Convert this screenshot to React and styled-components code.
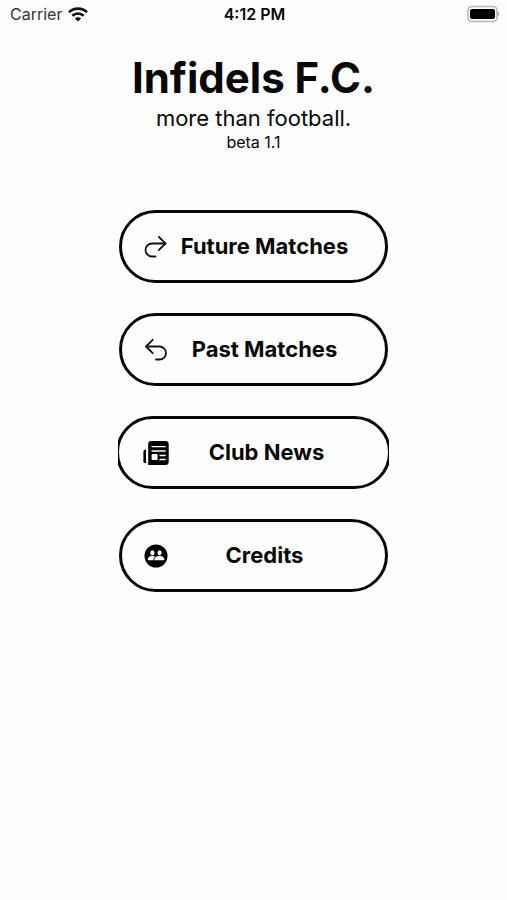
import React from 'react'
import styled, { createGlobalStyle, css } from 'styled-components'

const GlobalStyle = createGlobalStyle`
  * {
    box-sizing: border-box;
  }
  body {
    margin: 0;
    background: #fefefe;
    color: #080808;
    font-family: Inter, "Liberation Sans", sans-serif;
  }
`

function WifiIcon() {
  return (
    <svg width="20" height="15" viewBox="0 0 20 15" aria-hidden="true">
      <g fill="none" stroke="#111" strokeWidth="2.6">
        <path d="M1 5.2C6 .4 14 .4 19 5.2" />
        <path d="M4.3 8.8c3.2-3 8.2-3 11.4 0" />
      </g>
      <path d="M10 14.6l-3.1-3.1c1.7-1.6 4.5-1.6 6.2 0z" fill="#111" />
    </svg>
  )
}

function BatteryIcon() {
  return (
    <svg width="32" height="18" viewBox="0 0 32 18" aria-hidden="true">
      <rect x="1" y="1.5" width="29" height="15" rx="4" fill="#fff" stroke="#b8b8b8" strokeWidth="1.6" />
      <rect x="3" y="4" width="25" height="10" rx="2" fill="#000" />
      <path d="M31 7v4c1-.5 1-3.5 0-4z" fill="#aaa" stroke="#aaa" />
    </svg>
  )
}

function ForwardIcon() {
  return (
    <svg width="24" height="24" viewBox="0 0 24 24" fill="none" stroke="#111" strokeWidth="1.8" strokeLinecap="round" strokeLinejoin="round">
      <path d="M21.5 8.5H8a6.4 6.4 0 0 0 0 13h3.5" />
      <path d="M14.8 1.8l6.7 6.7-6.7 6.7" />
    </svg>
  )
}

function BackIcon() {
  return (
    <svg width="24" height="24" viewBox="0 0 24 24" fill="none" stroke="#111" strokeWidth="1.8" strokeLinecap="round" strokeLinejoin="round">
      <path d="M2 8.5h13.5a6.4 6.4 0 0 1 0 13H12" />
      <path d="M8.7 1.8L2 8.5l6.7 6.7" />
    </svg>
  )
}

function NewsIcon() {
  return (
    <svg width="26" height="26" viewBox="0 0 26 26">
      <path d="M3 9.5v13.5H1.8C.8 23 .4 22.3.4 21.500v-9.500C.4 10.5 1.5 9.500 3 9.500z" fill="#000" />
      <path d="M8.5 1h14A3.2 3.2 0 0 1 25.7 4.2V21.8A3.2 3.2 0 0 1 22.5 25H5.2V4.2A3.2 3.2 0 0 1 8.5 1z" fill="#000" />
      <path d="M9 6.7h13.2M9 11h13.2M17 15.5h5.2M17 19.5h5.2" stroke="#fff" strokeWidth="1.3" strokeLinecap="round" />
      <rect x="8.6" y="14" width="6" height="6" rx="1" fill="#fff" />
    </svg>
  )
}

function PeopleIcon() {
  return (
    <svg width="24" height="24" viewBox="0 0 24 24">
      <circle cx="12" cy="12" r="11.5" fill="#000" />
      <g fill="#fff">
        <ellipse cx="8.4" cy="8.8" rx="2.1" ry="2.6" />
        <ellipse cx="15.6" cy="8.8" rx="2.1" ry="2.6" />
        <path d="M3.8 16.200c-.4-2.800 2-4.300 4.600-4.300 1 0 2 .3 2.800.9-1.300 1-1.800 2-1.900 3.400z" />
        <path d="M10.300 16.200c-.3-2.800 2.500-4.300 5.300-4.300s5 1.500 4.700 4.300z" />
      </g>
    </svg>
  )
}

const links = [
  { label: 'Future Matches', icon: <ForwardIcon /> },
  { label: 'Past Matches', icon: <BackIcon /> },
  { label: 'Club News', icon: <NewsIcon />, wide: true },
  { label: 'Credits', icon: <PeopleIcon /> },
]

export default function App() {
  return (
    <>
      <GlobalStyle />
      <StatusBar>
        <Carrier>
          Carrier
          <WifiIcon />
        </Carrier>
        <Clock>4:12 PM</Clock>
        <Battery>
          <BatteryIcon />
        </Battery>
      </StatusBar>
      <Home>
        <Title>Infidels F.C.</Title>
        <Tagline>more than football.</Tagline>
        <Version>beta 1.1</Version>
        <Menu>
          {links.map(item => (
            <MenuButton key={item.label} type="button" $wide={item.wide}>
              <IconSlot>{item.icon}</IconSlot>
              <Label>{item.label}</Label>
            </MenuButton>
          ))}
        </Menu>
      </Home>
    </>
  )
}

const StatusBar = styled.header`
  display: grid;
  grid-template-columns: 1fr auto 1fr;
  align-items: center;
  height: 28px;
  padding: 0 8px 0 10px;
  font-size: 16px;
  line-height: 20px;
`

const Carrier = styled.div`
  display: flex;
  align-items: center;
  gap: 6px;
  color: #333;
`

const Clock = styled.time`
  font-weight: 600;
`

const Battery = styled.div`
  display: flex;
  justify-content: flex-end;
`

const Home = styled.main`
  display: flex;
  flex-direction: column;
  align-items: center;
  padding: 24px 16px;
`

const Title = styled.h1`
  margin: 0;
  font-size: 42px;
  line-height: 52px;
  font-weight: 700;
`

const Tagline = styled.p`
  margin: 0;
  font-size: 22px;
  line-height: 28px;
`

const Version = styled.p`
  margin: 0;
  font-size: 16px;
  line-height: 20px;
`

const Menu = styled.nav`
  display: flex;
  flex-direction: column;
  align-items: center;
  gap: 30px;
  margin-top: 58px;
`

const MenuButton = styled.button`
  display: flex;
  align-items: center;
  width: 269px;
  height: 73px;
  padding: 0 25px 0 21px;
  border: 3px solid #080808;
  border-radius: 37px;
  background: transparent;
  color: #080808;
  font: inherit;
  font-size: 22px;
  font-weight: 700;
  cursor: pointer;

  /* the outer pixels of the wide button are cut off at both sides */
  ${props => props.$wide && css`
    width: 275px;
    padding: 0 24px;
    clip-path: inset(0 2px);
  `}
`

const IconSlot = styled.span`
  display: flex;
  justify-content: center;
  width: 26px;

  svg {
    flex-shrink: 0;
  }
`

const Label = styled.span`
  flex: 1;
  padding-bottom: 2px;
  text-align: center;
  white-space: nowrap;
`
